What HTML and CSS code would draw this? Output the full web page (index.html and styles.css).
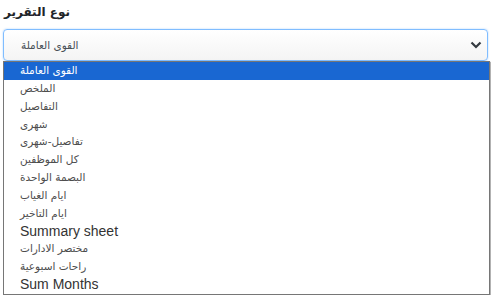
FILE: index.html
```html
<!DOCTYPE html>
<html lang="ar">
<head>
    <meta charset="UTF-8">
    <meta name="viewport" content="width=device-width, initial-scale=1.0">
    <title>نوع التقرير</title>
    <link rel="stylesheet" href="styles.css">
</head>
<body>
    <div class="form-group">
        <label class="label" for="report-type">نوع التقرير</label>

        <div class="select-wrap">
            <div class="select" id="report-type">
                <span>القوى العاملة</span>
                <svg class="chevron" width="12" height="8" viewBox="0 0 12 8">
                    <path d="M1.5 1.5 L6 6 L10.5 1.5" fill="none" stroke="#343a40" stroke-width="2.2"/>
                </svg>
            </div>

            <!-- Lista desplegada -->
            <div class="report-list">
                <div class="item selected">القوى العاملة</div>
                <div class="item">الملخص</div>
                <div class="item">التفاصيل</div>
                <div class="item">شهرى</div>
                <div class="item">تفاصيل-شهرى</div>
                <div class="item">كل الموظفين</div>
                <div class="item">البصمة الواحدة</div>
                <div class="item">ايام الغياب</div>
                <div class="item">ايام التاخير</div>
                <div class="item latin">Summary sheet</div>
                <div class="item">مختصر الادارات</div>
                <div class="item">راحات اسبوعية</div>
                <div class="item latin">Sum Months</div>
            </div>
        </div>
    </div>
</body>
</html>
```

FILE: styles.css
```css
body {
    font-family: "Liberation Sans", "DejaVu Sans", sans-serif;
    background-color: #ffffff;
    color: #212529;
    margin: 0;
    padding: 0 3px;
}

.form-group {
    padding-top: 3px;
}

.label {
    display: block;
    width: max-content;
    margin-left: 1px;
    font-family: "DejaVu Sans", sans-serif;
    font-size: 12px;
    font-weight: bold;
    line-height: 18px;
    color: #212529;
}

.select-wrap {
    margin-top: 8px;
    width: 485px;
}

.select {
    display: flex;
    align-items: center;
    justify-content: space-between;
    height: 30px;
    padding: 0 5px 0 17px;
    border: 1px solid #80bdff;
    border-radius: 4px;
    background: linear-gradient(#ffffff, #f4f4f4);
    box-shadow: 0 0 2px rgba(0, 123, 255, 0.35);
    font-family: "DejaVu Sans", sans-serif;
    font-size: 10.5px;
    color: #495057;
}

.report-list {
    width: 485px;
    margin-top: 0;
    background-color: #ffffff;
    border: 1px solid #767676;
    box-shadow: 2px 1px 1px rgba(0, 0, 0, 0.3);
    font-family: "DejaVu Sans", sans-serif;
    font-size: 10.5px;
    color: #4d4d4d;
}

.item {
    height: 17.85px;
    line-height: 17.85px;
    padding-left: 16px;
}

.item.selected {
    background-color: #1967d2; /* Azul de selección */
    color: #ffffff;
}

.item.latin {
    font-family: "Liberation Sans", sans-serif;
    font-size: 14px;
    color: #333333;
}
```
